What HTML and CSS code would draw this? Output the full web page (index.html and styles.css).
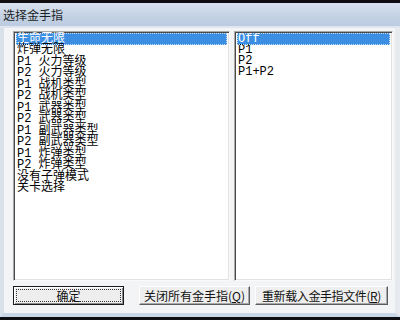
FILE: index.html
```html
<!DOCTYPE html>
<html lang="zh-CN">
<head>
<meta charset="UTF-8">
<title>选择金手指</title>
<link rel="stylesheet" href="styles.css">
</head>
<body>

<div class="window">
  <!-- TITLE -->
  <div class="titlebar">选择金手指</div>

  <!-- CLIENT AREA -->
  <div class="client">
    <div class="lists">
      <ul class="listbox cheats">
        <li class="selected">生命无限</li>
        <li>炸弹无限</li>
        <li>P1 火力等级</li>
        <li>P2 火力等级</li>
        <li>P1 战机类型</li>
        <li>P2 战机类型</li>
        <li>P1 武器类型</li>
        <li>P2 武器类型</li>
        <li>P1 副武器类型</li>
        <li>P2 副武器类型</li>
        <li>P1 炸弹类型</li>
        <li>P2 炸弹类型</li>
        <li>没有子弹模式</li>
        <li>关卡选择</li>
      </ul>
      <ul class="listbox options">
        <li class="selected">Off</li>
        <li>P1</li>
        <li>P2</li>
        <li>P1+P2</li>
      </ul>
    </div>

    <div class="buttons">
      <button class="btn btn-ok"><span>确定</span></button>
      <button class="btn btn-close">关闭所有金手指(<u>Q</u>)</button>
      <button class="btn btn-reload">重新载入金手指文件(<u>R</u>)</button>
    </div>
  </div>
</div>

</body>
</html>
```

FILE: styles.css
```css
body {
  margin: 0;
  background: #0d0d12;
  font-family: "Liberation Mono", "Noto Sans CJK SC", monospace;
  font-size: 12px;
  color: #000;
}

.window {
  width: 400px;
  height: 320px;
  display: flex;
  flex-direction: column;
  background: #0d0d12;
  overflow: hidden;
}

.titlebar {
  margin-top: 3px;
  height: 23px;
  line-height: 23px;
  padding-left: 3px;
  font-family: "Noto Sans CJK SC", sans-serif;
  font-size: 12px;
  color: #1c1f26;
  background: linear-gradient(#d9e2ee, #c3d1e3 60%, #bccbe0);
  border-bottom: 2px solid #dfe6ef;
}

.client {
  height: 282px;
  background: #f3f4f6;
  border-left: 4px solid #d8e0ea;
  border-right: 5px solid #e6eaef;
  border-bottom: 4px solid #c9d6e6;
  padding: 3px 0 0 9px;
}

.lists { display: flex; gap: 4px; }

.listbox {
  list-style: none;
  margin: 0;
  padding: 1px 2px;
  height: 246px;
  overflow: hidden;
  background: #fff;
  border-top: 1px solid #a8a8a8;
  border-left: 1px solid #a8a8a8;
  border-bottom: 1px solid #fafafa;
  border-right: 1px solid #fafafa;
  box-shadow: inset 1px 1px 0 #4a4a4a, inset -1px -1px 0 #e2e2e2;
}
.cheats { width: 211px; }
.options { width: 153px; }

.listbox li {
  height: 11.5px;
  line-height: 11.5px;
  padding-left: 1px;
  white-space: pre;
}
.listbox li.selected {
  height: 12px;
  line-height: 12px;
  background: #3b8ee2;
  color: #fff;
  outline: 1px dotted #c8def5;
  outline-offset: -1px;
}
.options li { height: 11px; line-height: 11px; }

.buttons {
  display: flex;
  margin-top: 5px;
  height: 19px;
}

.btn {
  height: 19px;
  padding: 0;
  font-family: "Noto Sans CJK SC", sans-serif;
  font-size: 12px;
  line-height: 15px;
  color: #111;
  background: #eeeeee;
  border-top: 1px solid #fdfdfd;
  border-left: 1px solid #fdfdfd;
  border-right: 1px solid #5c5c5c;
  border-bottom: 1px solid #5c5c5c;
  box-shadow: inset -1px -1px 0 #a7a7a7;
  white-space: nowrap;
}
.btn u { text-decoration: underline; }

.btn-ok {
  width: 111px;
  border: 1px solid #1a1a1a;
  box-shadow: inset 1px 1px 0 #fff, inset -1px -1px 0 #8a8a8a;
}
.btn-ok span {
  display: block;
  height: 11px;
  line-height: 11px;
  margin: 0 2px;
  border: 1px dotted #333;
}
.btn-close { width: 111px; margin-left: 15px; }
.btn-reload { width: 133px; margin-left: 5px; letter-spacing: -0.4px; }
```
